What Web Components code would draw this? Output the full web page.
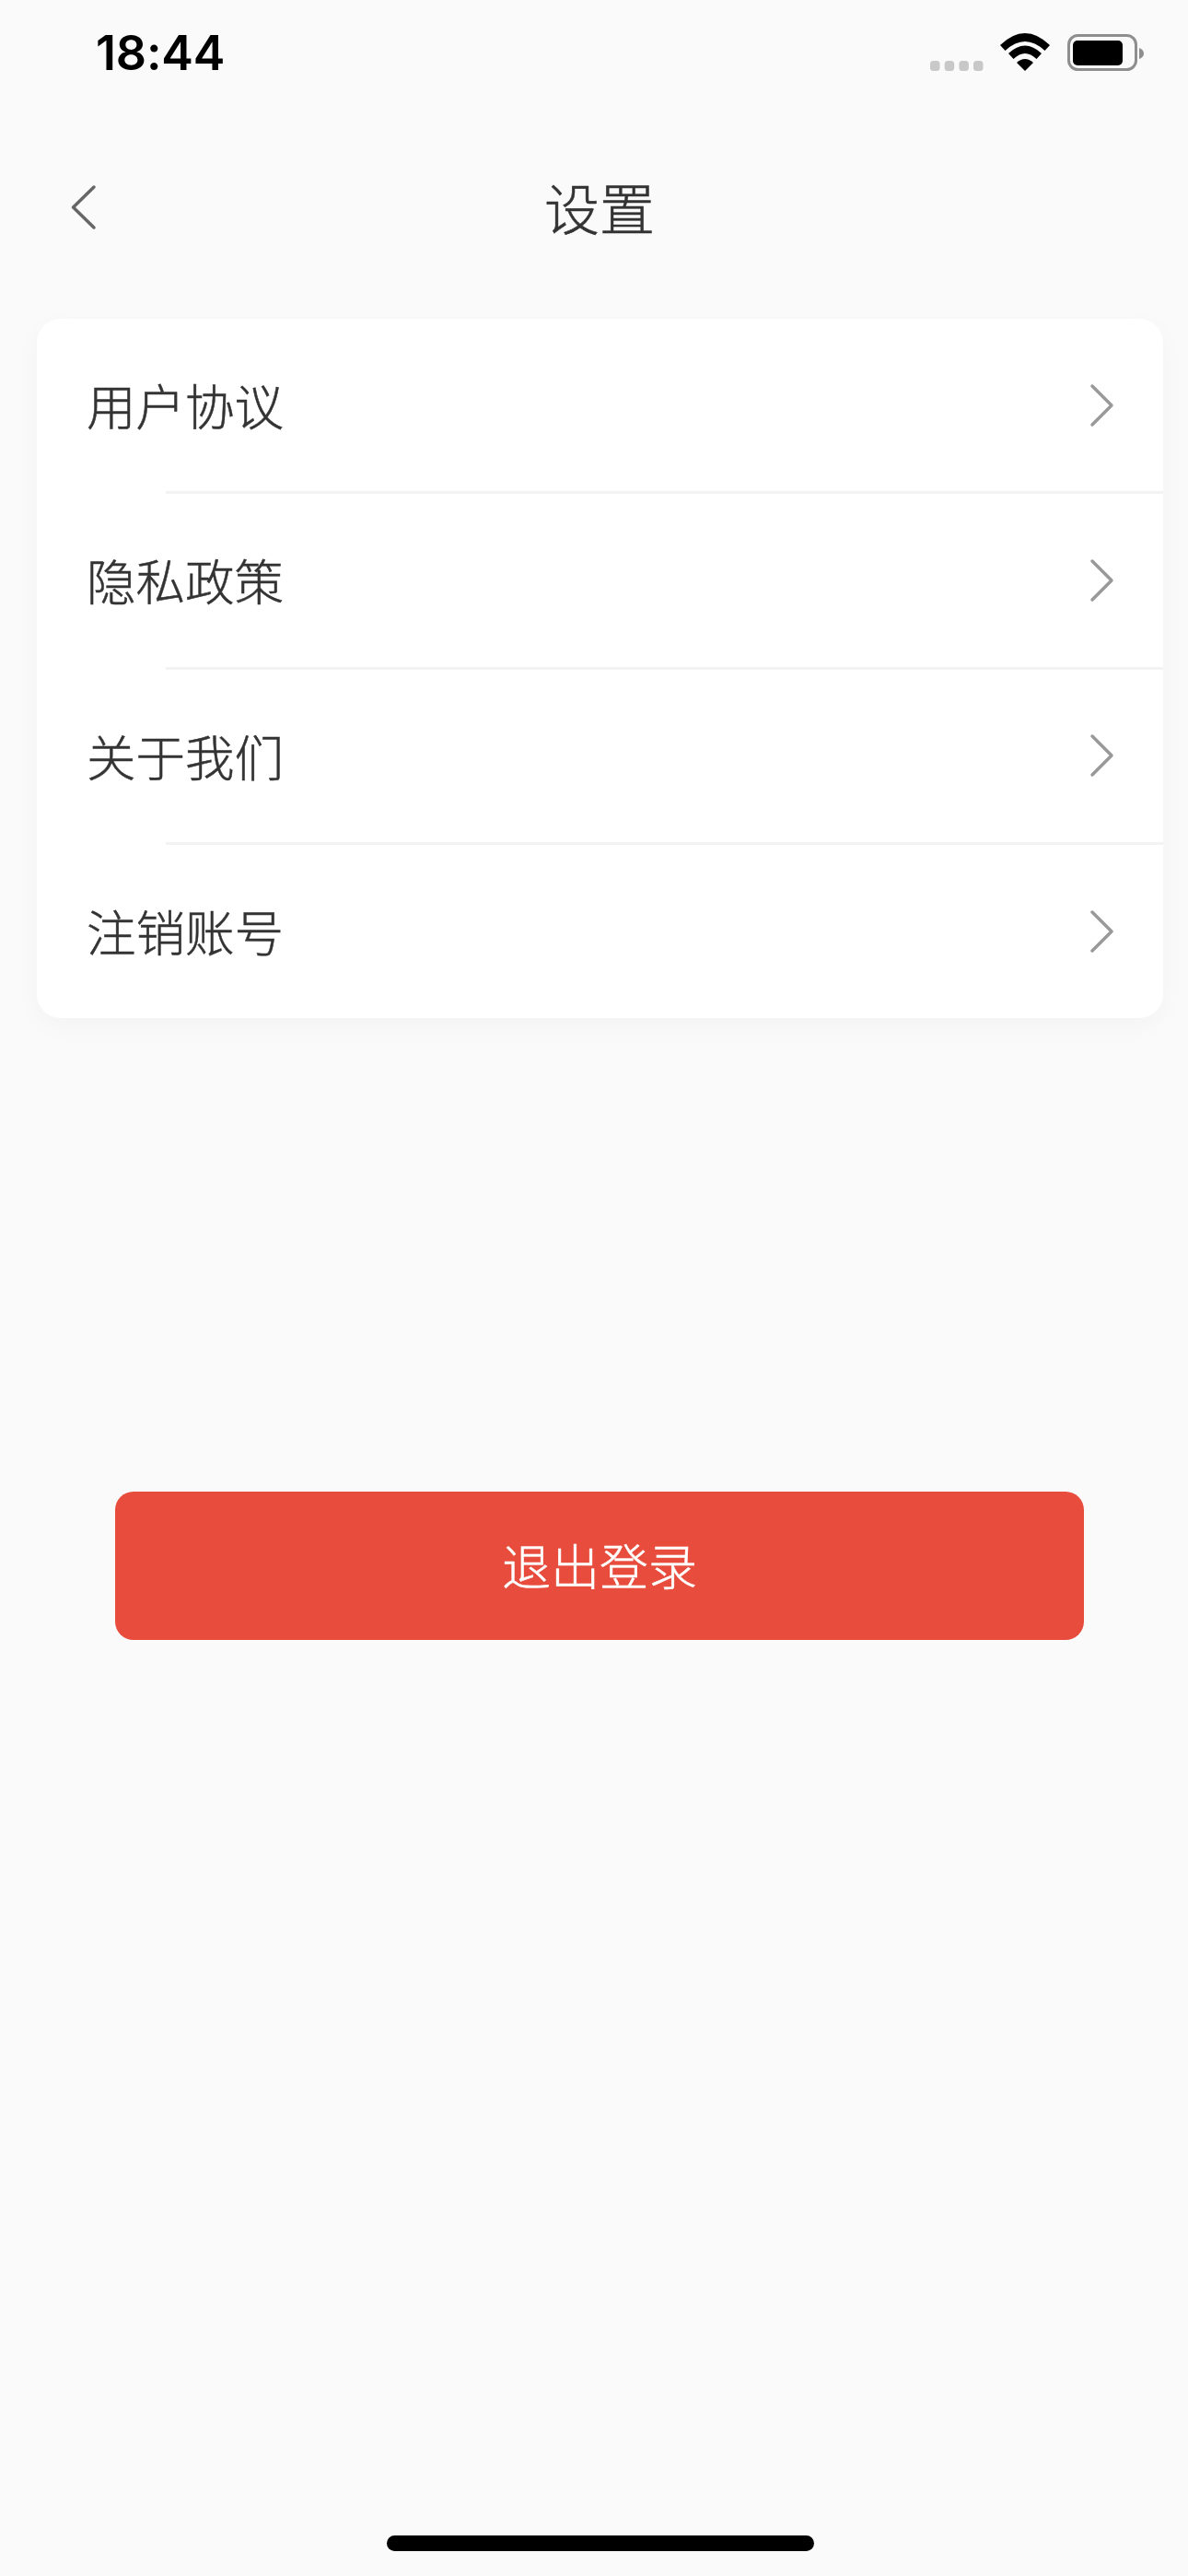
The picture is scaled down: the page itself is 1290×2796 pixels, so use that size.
<!DOCTYPE html>
<html lang="zh-CN">
<head>
<meta charset="utf-8">
<title>设置</title>
<style>
html,body{margin:0;padding:0;background:#fafafa;}
</style>
</head>
<body>
<settings-page>
  <status-bar slot="status" time="18:44"></status-bar>
  <nav-bar slot="nav" title="设置"></nav-bar>
  <settings-card slot="card">
    <settings-row>用户协议</settings-row>
    <settings-row>隐私政策</settings-row>
    <settings-row>关于我们</settings-row>
    <settings-row last>注销账号</settings-row>
  </settings-card>
  <logout-button slot="action">退出登录</logout-button>
  <home-indicator slot="home"></home-indicator>
</settings-page>
<script>
const CJK = '"Noto Sans CJK SC","Noto Sans",sans-serif';
function define(name, html, setup){
  customElements.define(name, class extends HTMLElement{
    constructor(){
      super();
      const r = this.attachShadow({mode:'open'});
      r.innerHTML = html;
      if(setup) setup(this, r);
    }
  });
}
define('settings-page', `
<style>
:host{display:flex;flex-direction:column;width:1290px;height:2796px;background:#fafafa;overflow:hidden;font-family:${CJK};}
::slotted([slot=home]){margin-top:auto;}
</style>
<slot name="status"></slot><slot name="nav"></slot><slot name="card"></slot><slot name="action"></slot><slot name="home"></slot>`);

define('status-bar', `
<style>
:host{display:flex;align-items:flex-start;height:110px;box-sizing:border-box;padding:0 46px 0 104px;}
.time{font:600 52px/1 Inter,Roboto,sans-serif;color:#000;margin-top:32px;letter-spacing:-.2px;}
.right{margin-left:auto;margin-top:36px;}
svg{display:block;}
</style>
<div class="time"></div>
<div class="right">
<svg width="234" height="42" viewBox="0 0 234 42" aria-hidden="true">
  <g fill="#c8c8c8">
    <rect x="0" y="30" width="10.5" height="11" rx="3.5"/>
    <rect x="15.7" y="30" width="10.5" height="11" rx="3.5"/>
    <rect x="31.4" y="30" width="10.5" height="11" rx="3.5"/>
    <rect x="47" y="30" width="10.5" height="11" rx="3.5"/>
  </g>
  <g fill="#000">
    <path d="M76 13 Q103 -13 130 13 L124.500 19 Q103 -1 81.500 19Z"/>
    <path d="M85 22 Q103 5 121 22 L115.500 28 Q103 16 90.500 28Z"/>
    <path d="M94 32 Q103 24 112 32 L103 41Z"/>
  </g>
  <rect x="150.500" y="2.500" width="73" height="37" rx="10" fill="none" stroke="#8e8e8e" stroke-width="3"/>
  <rect x="155" y="8" width="54" height="27" rx="5" fill="#000"/>
  <path d="M227 16 Q232 18 232 22 Q232 26 227 28Z" fill="#8e8e8e"/>
</svg>
</div>`, (h,r)=>{ r.querySelector('.time').textContent = h.getAttribute('time'); });

define('nav-bar', `
<style>
:host{display:flex;align-items:center;justify-content:center;position:relative;height:236px;box-sizing:border-box;padding-left:12px;}
.back{position:absolute;left:76px;top:90px;display:block;}
.title{font:300 60px/1 ${CJK};-webkit-text-stroke:.5px #333;color:#333;margin-top:-9px;}
</style>
<svg class="back" width="30" height="50" viewBox="0 0 30 50" aria-hidden="true"><path d="M26 3 L3.500 25 L26 47" fill="none" stroke="#666" stroke-width="3.500" stroke-linecap="round" stroke-linejoin="round"/></svg>
<div class="title"></div>`, (h,r)=>{ r.querySelector('.title').textContent = h.getAttribute('title'); });

define('settings-card', `
<style>
:host{display:block;width:1223px;margin-left:40px;background:#fff;border-radius:26px;box-shadow:0 8px 30px rgba(0,0,0,.03);overflow:hidden;}
</style>
<slot></slot>`);

define('settings-row', `
<style>
:host{display:block;}
.row{display:flex;align-items:center;height:187.33px;padding:0 52px 0 54px;font:300 53.5px/1 ${CJK};-webkit-text-stroke:.5px #333;color:#333;}
.text{flex:1;margin-top:-2px;}
svg{display:block;}
.sep{height:3px;background:#f3f3f3;margin-left:140px;}
:host([last]) .sep{display:none;}
:host([last]) .row{height:188px;}
</style>
<div class="row"><span class="text"><slot></slot></span>
<svg width="28" height="48" viewBox="0 0 28 48" aria-hidden="true"><path d="M3 3 L24 24 L3 45" fill="none" stroke="#999" stroke-width="3.500" stroke-linecap="round" stroke-linejoin="round"/></svg></div>
<div class="sep"></div>`);

define('logout-button', `
<style>
:host{display:flex;align-items:center;justify-content:center;width:1052px;height:161px;box-sizing:border-box;padding-bottom:2px;margin:514px 0 0 125px;background:#e74c3c;border-radius:20px;color:#fff;font:300 53px/1 ${CJK};-webkit-text-stroke:.5px #fff;}
</style>
<slot></slot>`);

define('home-indicator', `
<style>
:host{display:block;width:464px;height:17px;margin:0 0 27px 420px;background:#000;border-radius:9px;flex:none;}
</style>`);
</script>
</body>
</html>
